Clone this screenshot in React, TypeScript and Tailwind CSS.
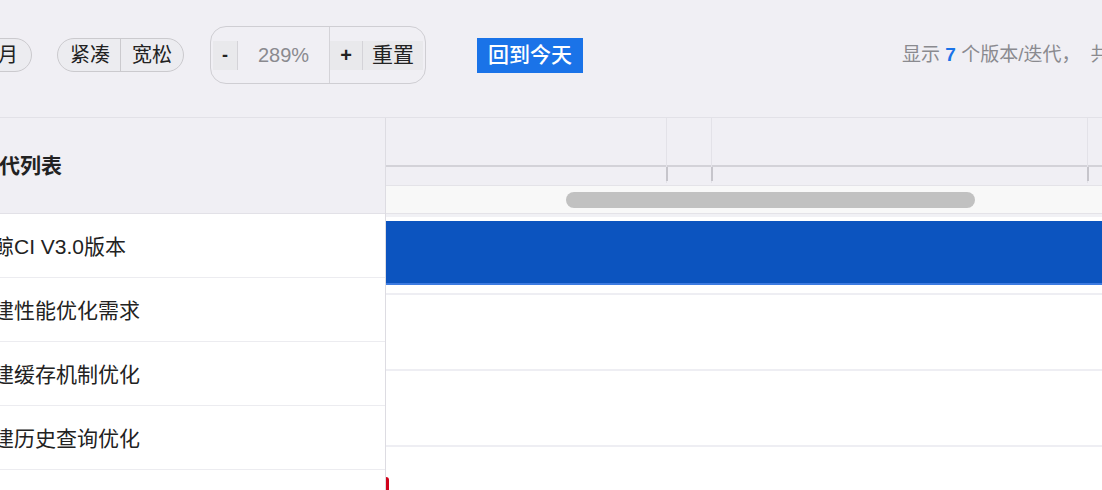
import React from "react";

const FONT = { fontFamily: '"Liberation Sans", "Noto Sans CJK SC", sans-serif' };

const rows = ["蓝鲸CI V3.0版本", "构建性能优化需求", "构建缓存机制优化", "构建历史查询优化", "流水线模板优化"];

function Toolbar() {
  return (
    <div className="flex h-[118px] shrink-0 items-center border-b border-[#e2e1e7] pb-[7px] whitespace-nowrap">
      {/* view mode group, scrolled partly out of sight */}
      <div className="ml-[-62px] flex h-[34px] shrink-0 items-stretch overflow-hidden rounded-full border border-[#cbcace] bg-[#ececf0] text-[20px] text-[#222]">
        <span className="flex w-[46px] items-center justify-center border-r border-[#cbcace]">周</span>
        <span className="flex w-[46px] items-center justify-center">月</span>
      </div>
      <div className="ml-[25px] flex h-[34px] shrink-0 items-stretch overflow-hidden rounded-full border border-[#cbcace] bg-[#ececf0] text-[20px] text-[#222]">
        <span className="flex w-[63px] items-center justify-center border-r border-[#cbcace] pl-[2px]">紧凑</span>
        <span className="flex w-[62px] items-center justify-center">宽松</span>
      </div>
      <div className="ml-[26px] flex h-[58px] w-[216px] shrink-0 items-center rounded-[16px] border border-[#cfced3] px-[2px]">
        <span className="flex h-[29px] w-[25px] items-center justify-center border-r border-[#d4d3d8] bg-[#e9e9ec] text-[18px] font-bold text-[#222]">-</span>
        <span className="flex flex-1 items-center justify-center text-[20px] text-[#8a8a8f]">289%</span>
        <span className="h-full w-px bg-[#d4d3d8]" />
        <span className="flex h-[29px] w-[33px] items-center justify-center border-r border-[#d4d3d8] bg-[#e9e9ec] text-[20px] font-bold text-[#222]">+</span>
        <span className="flex h-[29px] w-[60px] items-center justify-center bg-[#e9e9ec] text-[21px] text-[#222]">重置</span>
      </div>
      <button className="ml-[51px] flex h-[35px] w-[106px] shrink-0 items-center justify-center bg-[#1a73e8] text-[21px] font-medium text-white">
        回到今天
      </button>
      <div className="ml-[319px] shrink-0 text-[19px] text-[#8a8a8f]">
        显示 <span className="font-bold text-[#1a73e8]">7</span> 个版本/迭代，
        <span className="ml-[10px]">共 12 个需求</span>
      </div>
    </div>
  );
}

function LeftPanel() {
  return (
    <div className="relative z-10 flex w-[386px] shrink-0 flex-col border-r border-[#dddce2]">
      <div className="flex h-[96px] items-center border-b border-[#e2e1e7] whitespace-nowrap">
        <span className="ml-[-22px] text-[21px] font-bold text-[#222]">迭代列表</span>
      </div>
      {rows.map((r) => (
        <div key={r} className="flex h-[64px] items-center border-b border-[#ececf0] bg-white pt-[2px] whitespace-nowrap">
          <span className="ml-[-28px] text-[21px] text-[#222]">{r}</span>
        </div>
      ))}
    </div>
  );
}

function Timeline() {
  return (
    <div className="relative flex flex-1 flex-col overflow-hidden">
      {/* date header */}
      <div className="relative h-[67px] shrink-0">
        <div className="absolute top-[47px] right-0 left-0 h-[2px] bg-[#d3d2d8]" />
        {[280, 325, 701].map((x) => (
          <div key={x} className="absolute top-0 h-[65px] w-px bg-[#e3e2e8]" style={{ left: x }}>
            <div className="absolute top-[49px] h-[14px] w-[2px] bg-[#c6c5cb]" />
          </div>
        ))}
      </div>
      {/* horizontal scroll bar */}
      <div className="flex h-[29px] shrink-0 items-center border-y border-[#e4e3e8] bg-[#f8f8f8]">
        <div className="ml-[180px] h-[16px] w-[409px] rounded-full bg-[#c1c1c1]" />
      </div>
      <div className="flex flex-1 flex-col bg-white">
        <div className="h-[3px] bg-[#f1f1f5]" />
        <div className="flex h-[78px] flex-col border-b-2 border-[#eeeef3] pt-[4px]">
          <div className="h-[64px] border-b-2 border-[#3d7be0] bg-[#0c54bf]" />
        </div>
        <div className="h-[76px] border-b-2 border-[#eeeef3]" />
        <div className="h-[76px] border-b-2 border-[#eeeef3]" />
        <div className="flex-1" />
      </div>
      <div className="absolute top-[359px] left-[-2px] h-[16px] w-[5px] rounded-tr-[3px] bg-[#d0021b]" />
    </div>
  );
}

export default function App() {
  return (
    <div className="flex h-[490px] w-full flex-col overflow-hidden bg-[#f0eff4]" style={FONT}>
      <Toolbar />
      <div className="flex flex-1">
        <LeftPanel />
        <Timeline />
      </div>
    </div>
  );
}
